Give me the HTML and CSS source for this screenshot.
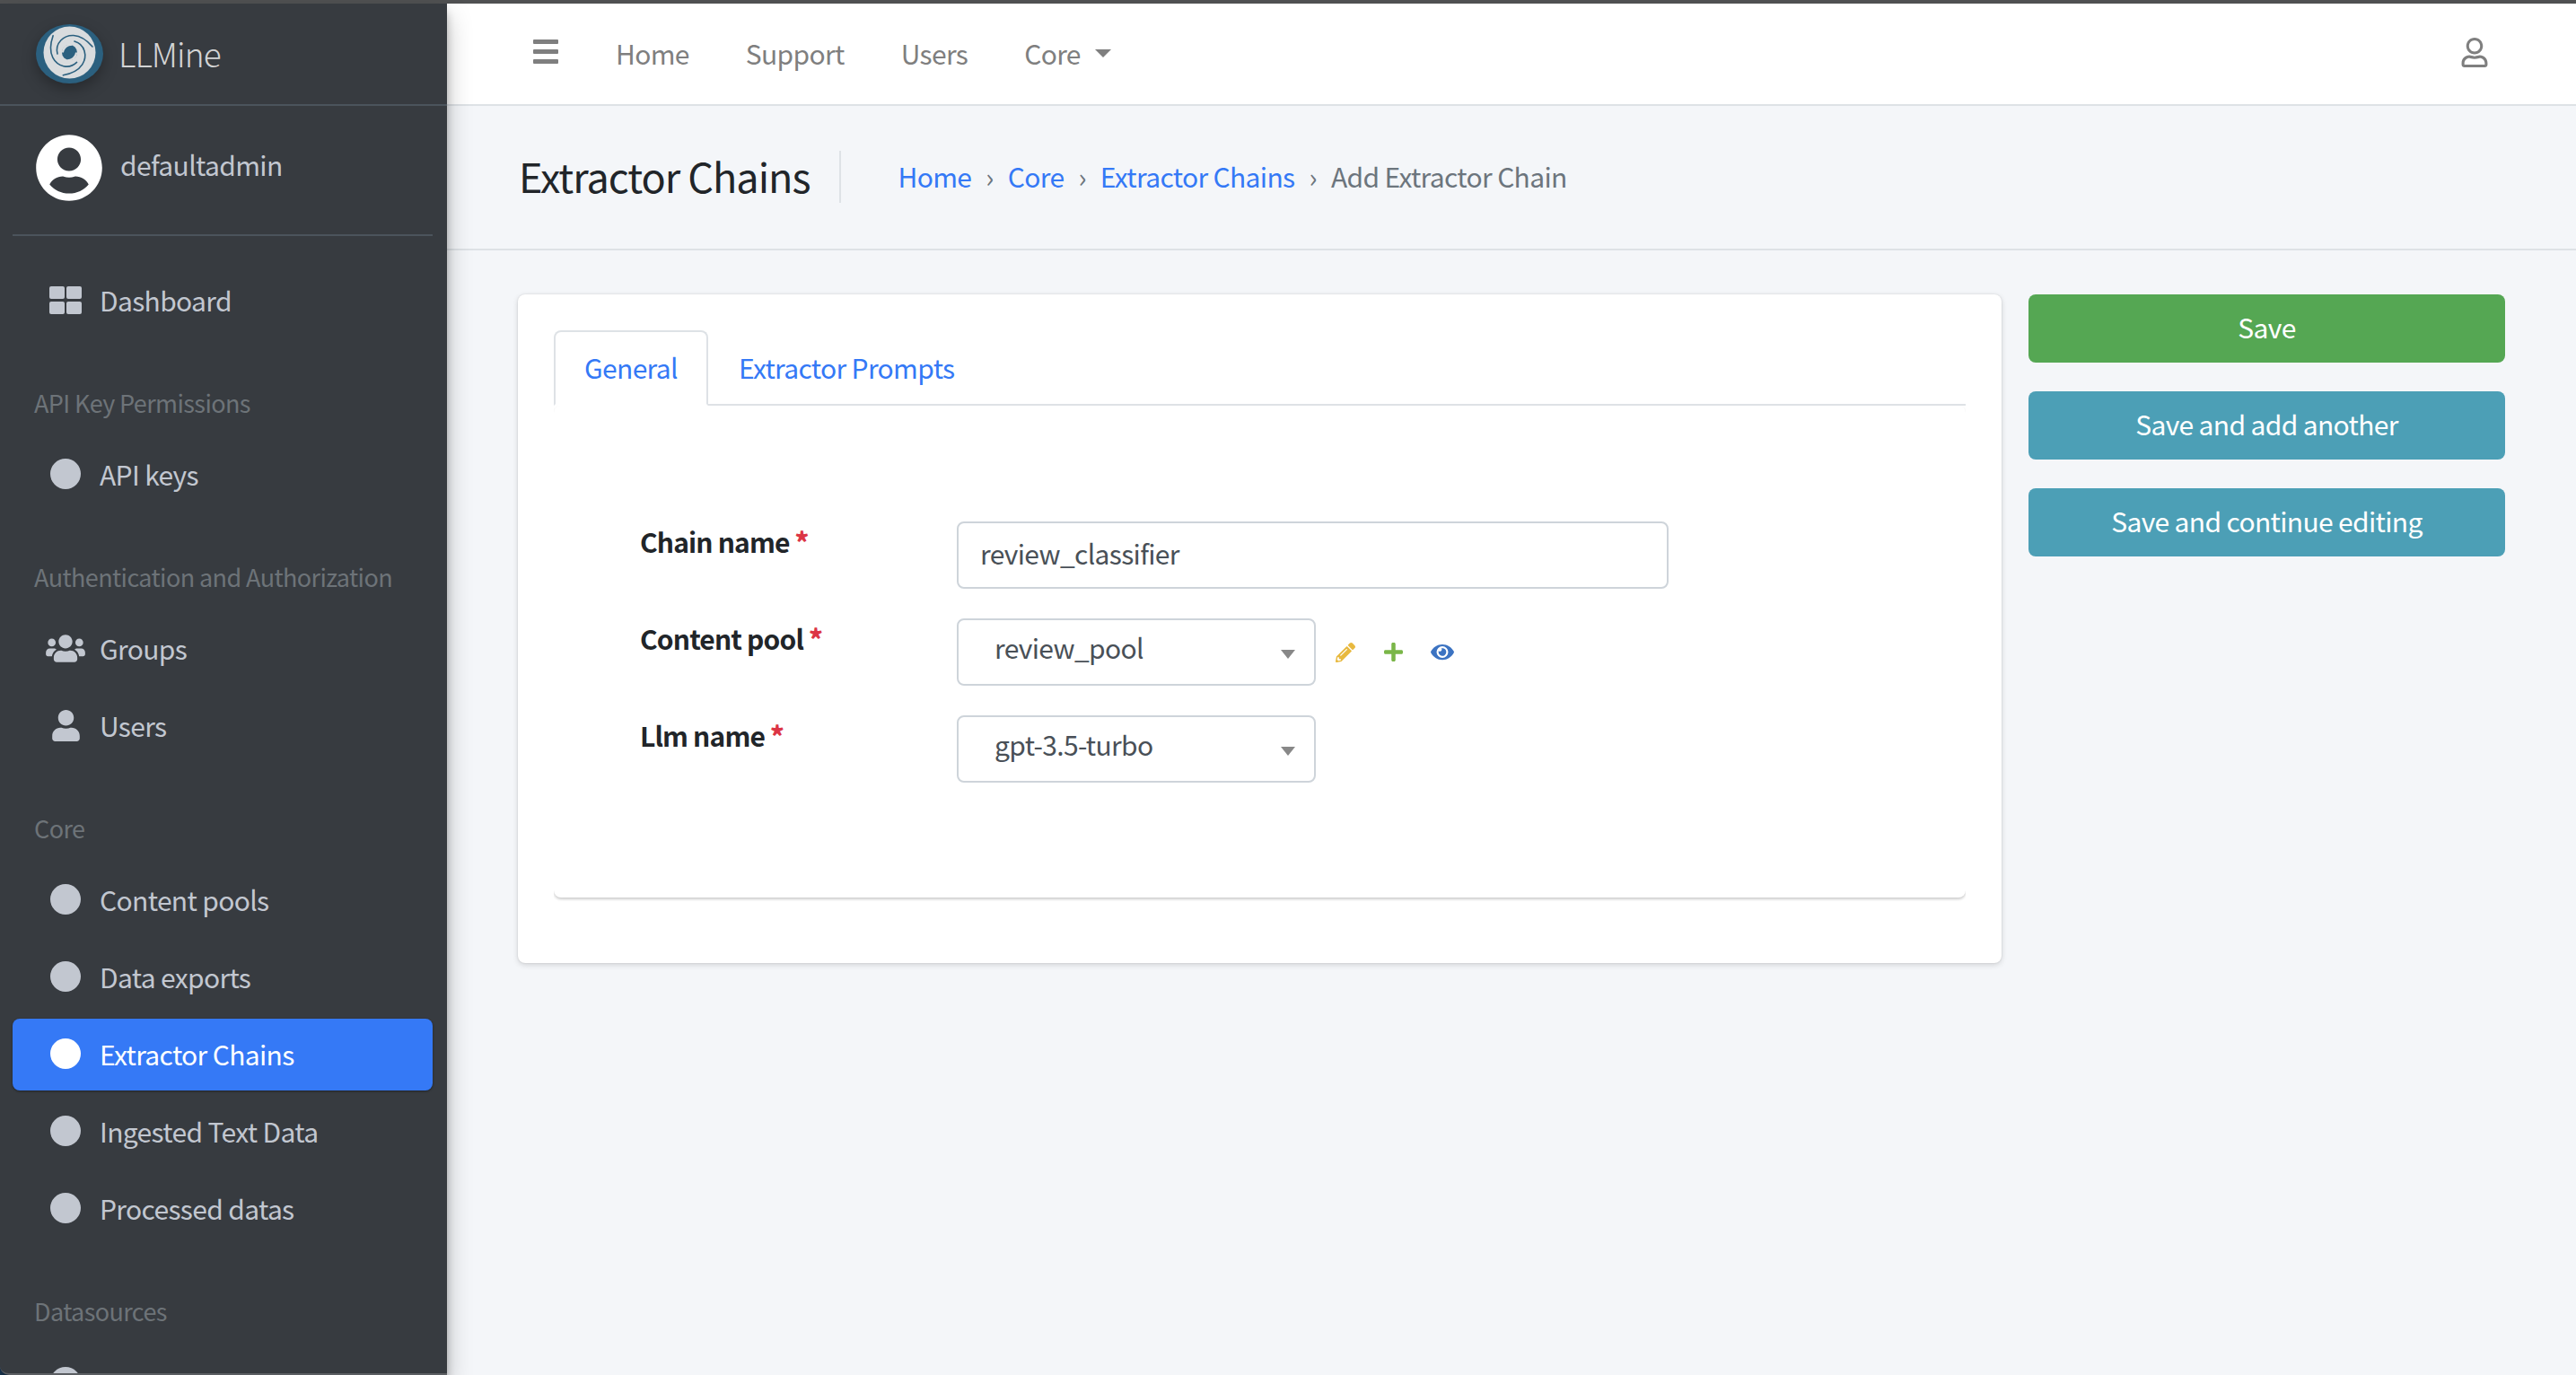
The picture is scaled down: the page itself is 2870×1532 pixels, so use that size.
FILE: index.html
```html
<!DOCTYPE html>
<html lang="en">
<head>
<meta charset="utf-8">
<title>Add Extractor Chain | LLMine</title>
<link rel="stylesheet" href="styles.css">
</head>
<body>
<div class="window">
  <div class="topline"></div>
  <div class="shell">
    <aside class="sidebar">
      <a class="brand" href="#">
        <svg class="logo" viewBox="0 0 75 66" aria-hidden="true">
          <ellipse cx="37.5" cy="33" rx="37.5" ry="33" fill="#2b607f"/>
          <circle cx="37.5" cy="31.5" r="29" fill="#d9dcde"/>
          <circle cx="37.5" cy="31.5" r="8.5" fill="#2b607f"/>
          <g fill="none" stroke="#2b607f" stroke-width="1.6" stroke-linecap="round">
            <path d="M24 33C21 21 31 12 42 12.500C50 13 57 18 63 25"/>
            <path d="M24 33C21 21 31 12 42 12.500C50 13 57 18 63 25" transform="rotate(120 37.500 31.500)"/>
            <path d="M24 33C21 21 31 12 42 12.500C50 13 57 18 63 25" transform="rotate(240 37.500 31.500)"/>
          </g>
          <g fill="#d9dcde">
            <path d="M29 31.500C29 24 36 21 42 24C37 23 32 26 31 31.500Z"/>
            <path d="M46 31.500C46 39 39 42 33 39C38 40 43 37 44 31.500Z"/>
          </g>
        </svg>
        <span class="brand-text">LLMine</span>
      </a>
      <div class="user-panel">
        <svg class="avatar" viewBox="0 0 496 512" aria-hidden="true"><path d="M248 8C111 8 0 119 0 256s111 248 248 248 248-111 248-248S385 8 248 8zm0 96c48.600 0 88 39.400 88 88s-39.400 88-88 88-88-39.400-88-88 39.400-88 88-88zm0 344c-58.700 0-111.300-26.600-146.500-68.200 18.800-35.400 55.600-59.800 98.500-59.800 2.400 0 4.800.4 7.100 1.100 13 4.200 26.600 6.900 40.900 6.900 14.300 0 28-2.700 40.900-6.900 2.300-.7 4.700-1.100 7.100-1.100 42.900 0 79.700 24.400 98.500 59.800C359.300 421.400 306.700 448 248 448z"/></svg>
        <span class="user-name">defaultadmin</span>
      </div>
      <nav class="menu">
        <a class="item" href="#"><span class="ico"><svg class="ico-tiles" viewBox="0 0 36 31" aria-hidden="true"><rect width="17" height="14" rx="2"/><rect x="19" width="17" height="14" rx="2"/><rect y="17" width="17" height="14" rx="2"/><rect x="19" y="17" width="17" height="14" rx="2"/></svg></span>Dashboard</a>
        <div class="group">API Key Permissions</div>
        <a class="item" href="#"><span class="ico"><span class="dot"></span></span>API keys</a>
        <div class="group">Authentication and Authorization</div>
        <a class="item" href="#"><span class="ico"><svg class="ico-groups" viewBox="0 0 640 512" aria-hidden="true"><path d="M96 224c35.300 0 64-28.700 64-64s-28.700-64-64-64-64 28.700-64 64 28.700 64 64 64zm448 0c35.300 0 64-28.700 64-64s-28.700-64-64-64-64 28.700-64 64 28.700 64 64 64zm32 32h-64c-17.600 0-33.500 7.100-45.100 18.600 40.300 22.100 68.900 62 75.100 109.400h66c17.700 0 32-14.300 32-32v-32c0-35.300-28.700-64-64-64zm-256 0c61.900 0 112-50.100 112-112S381.900 32 320 32 208 82.100 208 144s50.100 112 112 112zm76.800 32h-8.300c-20.800 10-43.900 16-68.500 16s-47.600-6-68.500-16h-8.300C179.600 288 128 339.600 128 403.200V432c0 26.500 21.500 48 48 48h288c26.500 0 48-21.500 48-48v-28.800c0-63.600-51.600-115.200-115.200-115.200zm-223.700-13.400C161.500 263.100 145.600 256 128 256H64c-35.300 0-64 28.700-64 64v32c0 17.700 14.300 32 32 32h65.900c6.300-47.400 34.900-87.300 75.200-109.400z"/></svg></span>Groups</a>
        <a class="item" href="#"><span class="ico"><svg class="ico-user" viewBox="0 0 448 512" aria-hidden="true"><path d="M224 256c70.700 0 128-57.300 128-128S294.700 0 224 0 96 57.300 96 128s57.300 128 128 128zm89.600 32h-16.700c-22.200 10.200-46.900 16-72.900 16s-50.600-5.800-72.900-16h-16.700C60.200 288 0 348.200 0 422.400V464c0 26.500 21.500 48 48 48h352c26.500 0 48-21.500 48-48v-41.600c0-74.200-60.200-134.400-134.400-134.400z"/></svg></span>Users</a>
        <div class="group">Core</div>
        <a class="item" href="#"><span class="ico"><span class="dot"></span></span>Content pools</a>
        <a class="item" href="#"><span class="ico"><span class="dot"></span></span>Data exports</a>
        <a class="item item-active" href="#"><span class="ico"><span class="dot"></span></span>Extractor Chains</a>
        <a class="item" href="#"><span class="ico"><span class="dot"></span></span>Ingested Text Data</a>
        <a class="item" href="#"><span class="ico"><span class="dot"></span></span>Processed datas</a>
        <div class="group">Datasources</div>
        <a class="item" href="#"><span class="ico"><span class="dot"></span></span>Data</a>
      </nav>
    </aside>
    <div class="main">
      <header class="navbar">
        <span class="burger"><i></i><i></i><i></i></span>
        <a class="nav-link" href="#">Home</a>
        <a class="nav-link" href="#">Support</a>
        <a class="nav-link" href="#">Users</a>
        <a class="nav-link" href="#">Core<span class="nav-caret"></span></a>
        <svg class="nav-user" viewBox="0 0 448 512" aria-hidden="true"><path d="M313.600 304c-28.700 0-42.500 16-89.600 16-47.100 0-60.800-16-89.600-16C60.200 304 0 364.200 0 438.400V464c0 26.500 21.500 48 48 48h352c26.500 0 48-21.500 48-48v-25.600c0-74.200-60.200-134.400-134.400-134.400zM400 464H48v-25.600c0-47.600 38.800-86.400 86.400-86.400 14.600 0 38.300 16 89.600 16 51.700 0 74.900-16 89.600-16 47.600 0 86.400 38.800 86.400 86.400V464zM224 288c79.500 0 144-64.500 144-144S303.500 0 224 0 80 64.500 80 144s64.500 144 144 144zm0-240c52.900 0 96 43.100 96 96s-43.100 96-96 96-96-43.100-96-96 43.100-96 96-96z"/></svg>
      </header>
      <section class="page-head">
        <h1 class="page-title">Extractor Chains</h1>
        <ol class="crumbs">
          <li><a href="#">Home</a></li>
          <li class="sep">›</li>
          <li><a href="#">Core</a></li>
          <li class="sep">›</li>
          <li><a href="#">Extractor Chains</a></li>
          <li class="sep">›</li>
          <li class="crumb-now">Add Extractor Chain</li>
        </ol>
      </section>
      <section class="content">
        <div class="card">
          <div class="tabs">
            <a class="tab tab-active" href="#">General</a>
            <a class="tab" href="#">Extractor Prompts</a>
          </div>
          <form class="panel">
            <div class="row">
              <label class="label">Chain name <b class="req">*</b></label>
              <input class="input" type="text" value="review_classifier">
            </div>
            <div class="row">
              <label class="label">Content pool <b class="req">*</b></label>
              <div class="select"><span>review_pool</span><i class="select-arrow"></i></div>
              <div class="actions">
                <svg class="act act-edit" viewBox="0 0 512 512" aria-hidden="true"><path d="M497.900 142.100l-46.100 46.100c-4.700 4.700-12.300 4.700-17 0l-111-111c-4.700-4.700-4.700-12.300 0-17l46.100-46.100c18.700-18.700 49.100-18.700 67.900 0l60.100 60.100c18.800 18.700 18.800 49.100 0 67.900zM284.200 99.800L21.600 362.400.4 483.900c-2.900 16.400 11.400 30.600 27.800 27.800l121.500-21.300 262.600-262.600c4.700-4.700 4.700-12.300 0-17l-111-111c-4.800-4.700-12.400-4.700-17.100 0zM124.100 339.900c-5.500-5.500-5.500-14.300 0-19.800l154-154c5.500-5.500 14.300-5.500 19.800 0s5.500 14.300 0 19.800l-154 154c-5.500 5.500-14.300 5.500-19.800 0zM88 424h48v36.300l-64.500 11.300-31.100-31.100L51.700 376H88v48z"/></svg>
                <svg class="act act-add" viewBox="0 0 448 448" aria-hidden="true"><path d="M416 176H272V32c0-17.670-14.330-32-32-32h-32c-17.670 0-32 14.330-32 32v144H32c-17.670 0-32 14.330-32 32v32c0 17.670 14.330 32 32 32h144v144c0 17.670 14.330 32 32 32h32c17.670 0 32-14.330 32-32V272h144c17.670 0 32-14.330 32-32v-32c0-17.670-14.330-32-32-32z"/></svg>
                <svg class="act act-view" viewBox="0 0 576 512" aria-hidden="true"><path d="M572.520 241.400C518.290 135.590 410.930 64 288 64S57.680 135.640 3.480 241.410a32.350 32.350 0 0 0 0 29.190C57.710 376.410 165.070 448 288 448s230.320-71.640 284.520-177.410a32.350 32.350 0 0 0 0-29.190zM288 400a144 144 0 1 1 144-144 143.930 143.930 0 0 1-144 144zm0-240a95.310 95.310 0 0 0-25.310 3.790 47.850 47.850 0 0 1-66.900 66.900A95.780 95.780 0 1 0 288 160z"/></svg>
              </div>
            </div>
            <div class="row">
              <label class="label">Llm name <b class="req">*</b></label>
              <div class="select"><span>gpt-3.5-turbo</span><i class="select-arrow"></i></div>
            </div>
          </form>
        </div>
        <div class="buttons">
          <button class="btn btn-green" type="button">Save</button>
          <button class="btn btn-teal" type="button">Save and add another</button>
          <button class="btn btn-teal" type="button">Save and continue editing</button>
        </div>
      </section>
    </div>
  </div>
</div>
</body>
</html>
```
FILE: styles.css
```css
* { box-sizing: border-box; }
html, body { margin: 0; padding: 0; }
body {
  width: 2870px;
  height: 1532px;
  overflow: hidden;
  background: #f4f6f9;
  font-family: "Noto Sans CJK SC", "Noto Sans", sans-serif;
  font-size: 30px;
  letter-spacing: -0.65px;
  line-height: 48px;
  color: #212529;
}
a { text-decoration: none; color: inherit; }
.window { display: flex; flex-direction: column; height: 1532px; }
.topline { height: 4px; flex: none; background: #505152; }
.shell { display: flex; flex: 1; min-height: 0; background: #1d3d5c; }

/* sidebar */
.sidebar {
  position: relative;
  z-index: 2;
  flex: none;
  width: 498px;
  overflow: hidden;
  background: #373b40;
  border-bottom: 2px solid #5b5e62;
  border-bottom-left-radius: 10px;
  box-shadow: 0 14px 28px rgba(0,0,0,.25), 0 10px 10px rgba(0,0,0,.22);
}
.brand {
  display: flex;
  align-items: center;
  height: 114px;
  padding: 0 0 6px 40px;
  border-bottom: 2px solid #4b545c;
}
.logo { width: 75px; height: 66px; margin-top: 6px; flex: none; filter: drop-shadow(0 6px 8px rgba(0,0,0,.3)); }
.brand-text { margin-left: 17px; margin-top: 4px; font-size: 37px; letter-spacing: -0.9px; font-weight: 300; color: rgba(255,255,255,.8); }
.user-panel {
  display: flex;
  align-items: center;
  height: 145px;
  margin: 0 16px 0 14px;
  padding: 0 0 5px 26px;
  border-bottom: 2px solid #4b545c;
}
.avatar { width: 74px; height: 76px; fill: #fff; flex: none; }
.user-name { margin-left: 20px; margin-bottom: 8px; color: #c2c7d0; }
.menu { padding: 32px 16px 0 14px; }
.item {
  display: flex;
  align-items: center;
  height: 80px;
  margin-bottom: 6px;
  padding: 0 0 2px 29px;
  border-radius: 8px;
  color: #c2c7d0;
}
.ico { display: flex; align-items: center; justify-content: center; flex: none; width: 60px; height: 36px; margin: 0 8px 0 0; fill: #c2c7d0; }
.dot { width: 34px; height: 34px; border-radius: 50%; background: #c2c7d0; }
.ico-tiles { width: 36px; height: 31px; }
.ico-groups { width: 44px; height: 35px; }
.ico-user { width: 31px; height: 35px; }
.item-active { background: #3579f6; color: #fff; box-shadow: 0 1px 3px rgba(0,0,0,.2), 0 1px 2px rgba(0,0,0,.24); }
.item-active .dot { background: #fff; }
.group { height: 108px; padding: 48px 0 0 24px; font-size: 27px; letter-spacing: -0.6px; line-height: 40px; white-space: nowrap; color: #6d7378; }

/* main */
.main { flex: 1; min-width: 0; background: #f4f6f9; }
.navbar {
  display: flex;
  align-items: center;
  height: 114px;
  padding: 0 98px 3px 96px;
  background: #fff;
  border-bottom: 2px solid #dee2e6;
  color: #7f7f7f;
}
.burger { display: flex; flex-direction: column; gap: 6px; width: 28px; margin: 0 64px 3px 0; }
.burger i { display: block; height: 5px; background: #7f7f7f; border-radius: 1px; }
.nav-link { margin-right: 63px; }
.nav-caret { display: inline-block; margin: 0 0 8px 16px; vertical-align: middle; border-top: 9px solid #7f7f7f; border-left: 9px solid transparent; border-right: 9px solid transparent; }
.nav-user { width: 30px; height: 33px; margin-left: auto; fill: #7f7f7f; }
.page-head {
  display: flex;
  align-items: center;
  height: 161px;
  padding: 0 0 2px 80px;
  border-bottom: 2px solid #dee2e6;
}
.page-title {
  margin: 0;
  padding: 3px 32px 3px 0;
  height: 58px;
  font-size: 45px;
  letter-spacing: -1px;
  font-weight: 400;
  line-height: 50px;
  border-right: 2px solid #dee2e6;
}
.crumbs { display: flex; gap: 16px; margin: 0; padding: 0 0 2px 64px; list-style: none; color: #6c757d; }
.crumbs a { color: #3479f6; }
.sep { color: #6c757d; }
.crumb-now { color: #6c757d; }

/* content */
.content { display: flex; align-items: flex-start; gap: 30px; padding: 49px 79px 0; }
.card {
  flex: none;
  width: 1653px;
  height: 745px;
  padding: 40px;
  background: #fff;
  border-radius: 8px;
  box-shadow: 0 0 2px rgba(0,0,0,.125), 0 2px 6px rgba(0,0,0,.15);
}
.tabs { display: flex; height: 84px; border-bottom: 2px solid #dee2e6; }
.tab { height: 84px; padding: 15px 32px 0; border: 2px solid transparent; border-radius: 8px 8px 0 0; color: #3479f6; }
.tab-active { border-color: #dee2e6 #dee2e6 #fff; background: #fff; }
.panel { height: 548px; padding: 129px 0 0 96px; border-radius: 8px; box-shadow: 0 2px 3px rgba(0,0,0,.2); clip-path: inset(0 0 -10px 0); }
.row { display: flex; align-items: flex-start; height: 75px; margin-bottom: 33px; }
.label { flex: none; width: 353px; margin-top: -2px; font-weight: 700; letter-spacing: -0.85px; }
.req { color: #dc3545; }
.input {
  width: 793px;
  height: 75px;
  padding: 0 24px 5px;
  border: 2px solid #ced4da;
  border-radius: 8px;
  background: #fff;
  font: inherit;
  letter-spacing: inherit;
  color: #495057;
}
.select {
  position: relative;
  width: 400px;
  height: 75px;
  padding: 6px 0 0 40px;
  border: 2px solid #ced4da;
  border-radius: 8px;
  color: #495057;
}
.select-arrow { position: absolute; top: 33px; right: 21px; border-top: 10px solid #888; border-left: 8px solid transparent; border-right: 8px solid transparent; }
.actions { display: flex; align-items: center; height: 75px; padding-left: 22px; }
.act { display: block; flex: none; }
.act-edit { width: 22px; height: 22px; fill: #e8b93f; }
.act-add { width: 21px; height: 21px; margin-left: 32px; fill: #7ab648; }
.act-view { width: 26px; height: 23px; margin-left: 31px; fill: #3c73c2; }

.buttons { display: flex; flex-direction: column; gap: 32px; width: 531px; flex: none; }
.btn {
  height: 76px;
  padding: 0 0 4px;
  border: 0;
  border-radius: 8px;
  font: inherit;
  letter-spacing: inherit;
  color: #fff;
}
.btn-green { background: #55a753; }
.btn-teal { background: #4c9fb6; }
```
